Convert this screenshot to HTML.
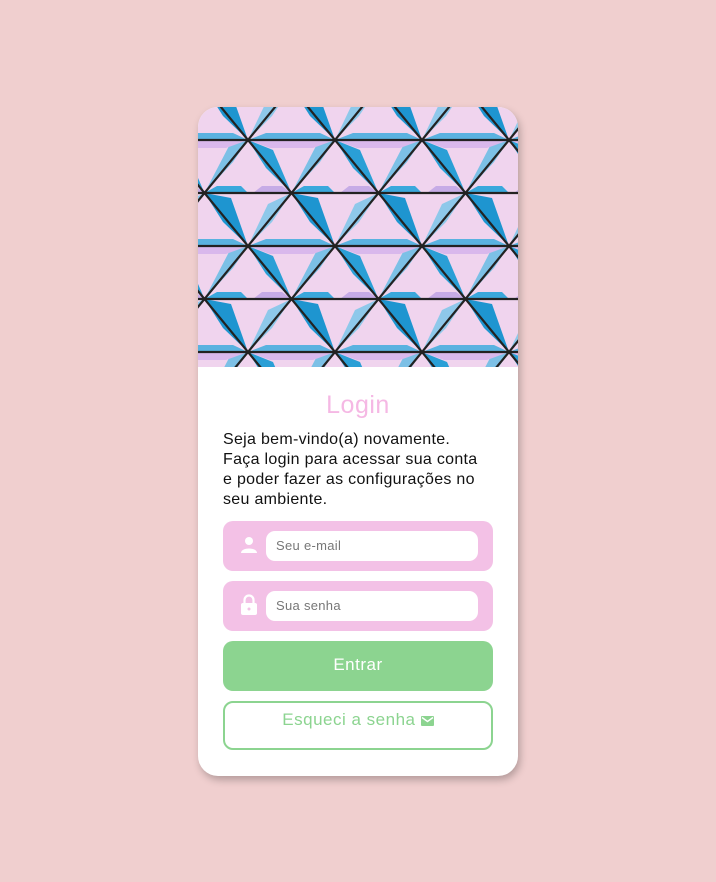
<!DOCTYPE html>
<html><head><style>
html,body{margin:0;padding:0;}
body{width:716px;height:882px;background:#f0cfcf;position:relative;font-family:"Liberation Sans",sans-serif;overflow:hidden;}
.card{position:absolute;left:198px;top:107px;width:320px;height:669px;background:#fff;border-radius:20px;overflow:hidden;box-shadow:2px 4px 8px rgba(0,0,0,0.25);}
.img{position:absolute;left:0;top:0;width:320px;height:260px;}
h1{position:absolute;top:284px;left:0;width:320px;text-align:center;margin:0;font-size:25px;font-weight:normal;color:#f5b8e4;letter-spacing:0.5px;}
p{position:absolute;left:25px;top:323px;width:290px;margin:0;font-size:16px;line-height:20px;color:#111;letter-spacing:0.3px;white-space:nowrap;}
.field{position:absolute;left:25px;width:270px;height:50px;background:#f3c1e6;border-radius:10px;}
.field .in{position:absolute;left:43px;top:10px;width:212px;height:30px;background:#fff;border-radius:9px;font-size:13px;color:#777;line-height:30px;padding-left:10px;box-sizing:border-box;letter-spacing:0.3px;}
.field svg{position:absolute;left:17px;top:15px;}
.btn{position:absolute;left:25px;top:534px;width:270px;height:50px;background:#8cd490;border-radius:10px;color:#fff;text-align:center;line-height:48px;font-size:17px;letter-spacing:0.5px;}
.btn2{position:absolute;left:25px;top:594px;width:270px;height:49px;border:2px solid #8cd490;box-sizing:border-box;border-radius:10px;color:#8cd490;text-align:center;font-size:17px;line-height:34px;letter-spacing:0.5px;}
</style></head><body>
<div class="card">
<svg class="img" width="320" height="260" viewBox="0 0 320 260">
<defs>
<pattern id="p" width="87" height="106" patternUnits="userSpaceOnUse" x="50" y="33">
<rect width="87" height="106" fill="#f0d4ee"/>
<polygon points="0,0 25,10 43.5,53 18,28" fill="#2a9fd6"/>
<polygon points="87,0 68,6 43.5,53 72,22" fill="#7cc0e6"/>
<polygon points="43.5,53 70,58 87,106 62,82" fill="#1e95d0"/>
<polygon points="43.5,53 20,64 0,106 24,82" fill="#8ec8ea"/>
<polygon points="0,0 87,0 65,8 22,8" fill="#d9b8ec"/>
<polygon points="43.5,53 5,53 14,46 34,46" fill="#c6abe6"/>
<polygon points="43.5,53 87,53 80,46 56,46" fill="#3aa8dc"/>
<polygon points="0,106 87,106 72,99 18,99" fill="#5ab2e0"/>
<g stroke="#222" stroke-width="2.2" fill="none">
<line x1="-1" y1="0" x2="88" y2="0"/><line x1="-1" y1="53" x2="88" y2="53"/><line x1="-1" y1="106" x2="88" y2="106"/>
<line x1="0" y1="0" x2="87" y2="106"/><line x1="87" y1="0" x2="0" y2="106"/>
<line x1="87" y1="0" x2="130.5" y2="53"/><line x1="87" y1="106" x2="130.5" y2="53"/>
<line x1="0" y1="0" x2="-43.5" y2="53"/><line x1="0" y1="106" x2="-43.5" y2="53"/>
</g>
</pattern>
</defs>
<rect width="320" height="260" fill="url(#p)"/>
</svg>
<h1>Login</h1>
<p>Seja bem-vindo(a) novamente.<br>Faça login para acessar sua conta<br>e poder fazer as configurações no<br>seu ambiente.</p>
<div class="field" style="top:414px">
<svg width="18" height="18" viewBox="0 0 18 18"><circle cx="9" cy="5" r="4" fill="#fff"/><path d="M1 17 C1 11 17 11 17 17 Z" fill="#fff"/></svg>
<div class="in">Seu e-mail</div></div>
<div class="field" style="top:474px">
<svg width="18" height="22" viewBox="0 0 18 22" style="top:13px"><path d="M4.5 9 V6 a4.5 4.5 0 0 1 9 0 V9" stroke="#fff" stroke-width="2.2" fill="none"/><rect x="1" y="9" width="16" height="12" rx="2" fill="#fff"/><circle cx="9" cy="15" r="1.5" fill="#f3c1e6"/></svg>
<div class="in">Sua senha</div></div>
<div class="btn">Entrar</div>
<div class="btn2">Esqueci a senha <svg width="13" height="10" viewBox="0 0 13 10" style="vertical-align:-1px"><rect width="13" height="10" rx="1" fill="#8cd490"/><path d="M1 1.5 L6.5 5.5 L12 1.5" stroke="#fff" stroke-width="1.4" fill="none"/></svg></div>
</div>
</body></html>
